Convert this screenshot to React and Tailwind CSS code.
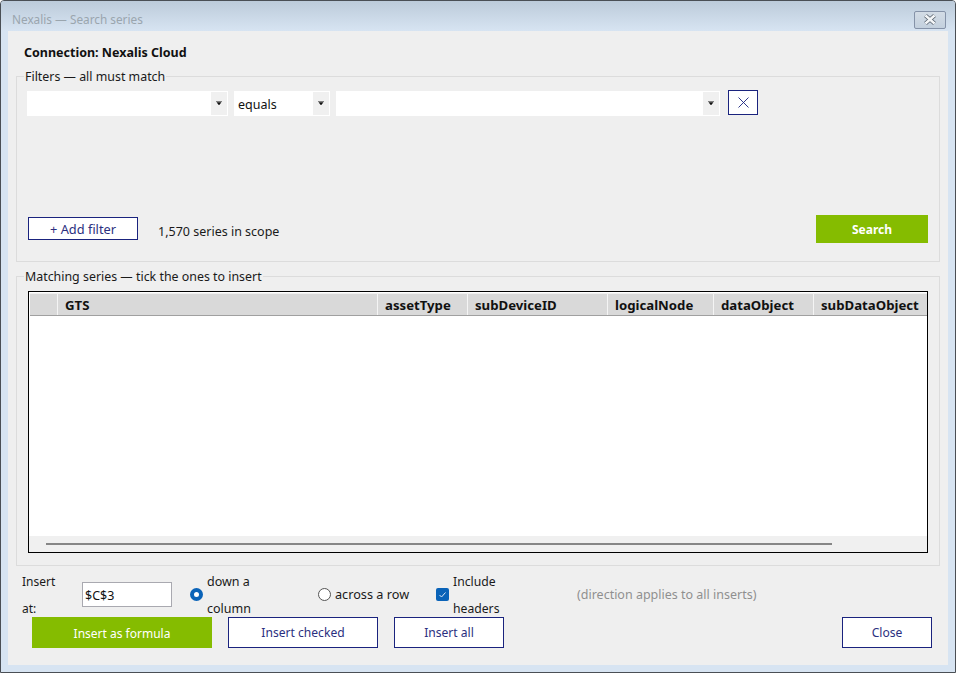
import React from "react";

const columns = [
  { name: "", width: "w-[28px]" },
  { name: "GTS", width: "w-[320px]" },
  { name: "assetType", width: "w-[90px]" },
  { name: "subDeviceID", width: "w-[140px]" },
  { name: "logicalNode", width: "w-[106px]" },
  { name: "dataObject", width: "w-[100px]" },
  { name: "subDataObject", width: "flex-1" },
];

const Caret = () => (
  <svg width="6" height="5" viewBox="0 0 6 5" className="block">
    <path d="M0 0.5H6M1 1.5H5L3 4Z" fill="#111" stroke="#111" strokeWidth="0.5" />
  </svg>
);

const Combo = ({ width, value }) => (
  <div className={`${width} h-[25px] flex bg-white border border-white`}>
    <div className="flex-1 pl-[3px] pt-px leading-[24px] text-[#111]">{value}</div>
    <div className="w-[16px] bg-[#f0f0f0] flex items-center justify-center">
      <Caret />
    </div>
  </div>
);

const OutlineButton = ({ width, children }) => (
  <button className={`${width} h-[31px] pt-[2px] bg-white border border-[#1a237e] text-[#2b2f80] text-[12.1px] text-center`}>
    {children}
  </button>
);

const App = () => {
  return (
    <div className="w-[956px] h-[673px] overflow-hidden flex flex-col bg-[#d7e4f2] border border-[#4a4f55] rounded-t-[4px] text-[12.5px] text-[#1a1a1a] font-['Noto_Sans',sans-serif]">
      <div className="h-[30px] shrink-0 pl-[11px] pr-[9px] flex items-center justify-between bg-gradient-to-b from-[#bccbda] to-[#d7e4f2]">
        <span className="text-[#9aa5ae] text-[11.8px] pt-[7px]">Nexalis — Search series</span>
        <div className="w-[32px] h-[18px] mt-[7px] flex items-center justify-center rounded-[2px] border border-[#8592a8] bg-gradient-to-b from-[#d3dce6] to-[#c3d0de]">
          <svg width="14" height="11" viewBox="0 0 14 11">
            <path d="M2.5 1.5L11.5 9.5M11.5 1.5L2.5 9.5" stroke="#56606c" strokeWidth="4" />
            <path d="M2.5 1.5L11.5 9.5M11.5 1.5L2.5 9.5" stroke="#f4f6f8" strokeWidth="2.4" />
          </svg>
        </div>
      </div>

      <div className="mx-[7px] h-[634px] shrink-0 bg-[#efefef] px-[8px]">
        <div className="pl-[8px] pt-[13px] h-[36px] font-bold text-[#111] text-[12.5px]">Connection: Nexalis Cloud</div>

        <fieldset className="h-[195px] border border-[#dcdcdc]">
          <legend className="ml-[7px] px-[1px] h-[18px] pt-px leading-[18px] text-[12.4px]">Filters — all must match</legend>
          <div className="pl-[10px] pr-[11px]">
            <div className="pt-[6px] flex gap-[6px] items-start">
              <Combo width="w-[201px]" />
              <Combo width="w-[96px]" value="equals" />
              <Combo width="w-[384px]" />
              <button className="ml-[2px] -mt-[1px] w-[30px] h-[25px] bg-white border border-[#1a237e] flex items-center justify-center">
                <svg width="11" height="11" viewBox="0 0 11 11">
                  <path d="M0.5 0.5L10.5 10.5M10.5 0.5L0.5 10.5" stroke="#1a237e" strokeWidth="0.9" />
                </svg>
              </button>
            </div>
            <div className="mt-[99px] flex items-start">
              <button className="ml-[1px] mt-[2px] w-[110px] h-[23px] pt-[2px] bg-white border border-[#1a237e] text-[#2b2f80] text-[12.8px]">+ Add filter</button>
              <span className="ml-[20px] mt-[8px] leading-[18px]">1,570 series in scope</span>
              <button className="ml-auto w-[112px] h-[28px] pt-[2px] bg-[#85bc00] text-white font-bold text-[12px]">Search</button>
            </div>
          </div>
        </fieldset>

        <fieldset className="mt-[5px] h-[299px] border border-[#dcdcdc]">
          <legend className="ml-[7px] px-[1px] h-[18px] pt-px leading-[18px] text-[12.4px]">Matching series — tick the ones to insert</legend>
          <div className="px-[11px]">
            <div className="mt-[6px] h-[262px] flex flex-col border border-black bg-white">
              <div className="mt-px ml-px h-[23px] flex bg-[#d9d9d9] border-b border-[#a0a0a0] border-t border-t-[#f0f0f0]">
                {columns.map((col) => (
                  <div key={col.name} className={`${col.width} pl-[7px] pt-px leading-[20px] font-bold text-[#111] text-[13.2px] border-r border-[#f4f4f4] last:border-r-0`}>
                    {col.name}
                  </div>
                ))}
              </div>
              <div className="flex-1" />
              <div className="h-[16px] bg-[#f0f0f0] pl-[17px] pt-[7px]">
                <div className="w-[786px] h-[2px] bg-[#868686]" />
              </div>
            </div>
          </div>
        </fieldset>

        <div className="mt-[16px] h-[25px] flex items-center pl-[6px] leading-[27px]">
          <span className="w-[50px] text-[12px]">Insert at:</span>
          <input
            readOnly
            value="$C$3"
            className="ml-[10px] w-[90px] h-[25px] px-[2px] pt-px bg-white border border-[#a9a9b0] text-[#111] outline-none"
          />
          <span className="ml-[18px] w-[13px] h-[13px] rounded-full border-[4px] border-[#0a63b8] bg-white" />
          <span className="ml-[4px] w-[89px]">down a column</span>
          <span className="ml-[22px] w-[13px] h-[13px] rounded-full border border-[#555] bg-white" />
          <span className="ml-[4px] w-[75px] text-[12.7px]">across a row</span>
          <span className="ml-[26px] w-[13px] h-[13px] rounded-[2px] bg-[#0a63b8] flex items-center justify-center">
            <svg width="9" height="8" viewBox="0 0 9 8">
              <path d="M1.5 4L3.5 6L7.5 1.5" stroke="#dbe8f6" strokeWidth="1" fill="none" />
            </svg>
          </span>
          <span className="ml-[4px] w-[92px] text-[12.2px]">Include headers</span>
          <span className="ml-[32px] text-[#8f8f8f]">(direction applies to all inserts)</span>
        </div>

        <div className="mt-[10px] flex pl-[16px] pr-[8px] gap-[16px]">
          <button className="w-[180px] h-[31px] pt-[2px] bg-[#85bc00] text-white text-[12px]">Insert as formula</button>
          <OutlineButton width="w-[150px]">Insert checked</OutlineButton>
          <OutlineButton width="w-[110px]">Insert all</OutlineButton>
          <div className="flex-1" />
          <OutlineButton width="w-[90px]">Close</OutlineButton>
        </div>
      </div>
    </div>
  );
};

export default App;
